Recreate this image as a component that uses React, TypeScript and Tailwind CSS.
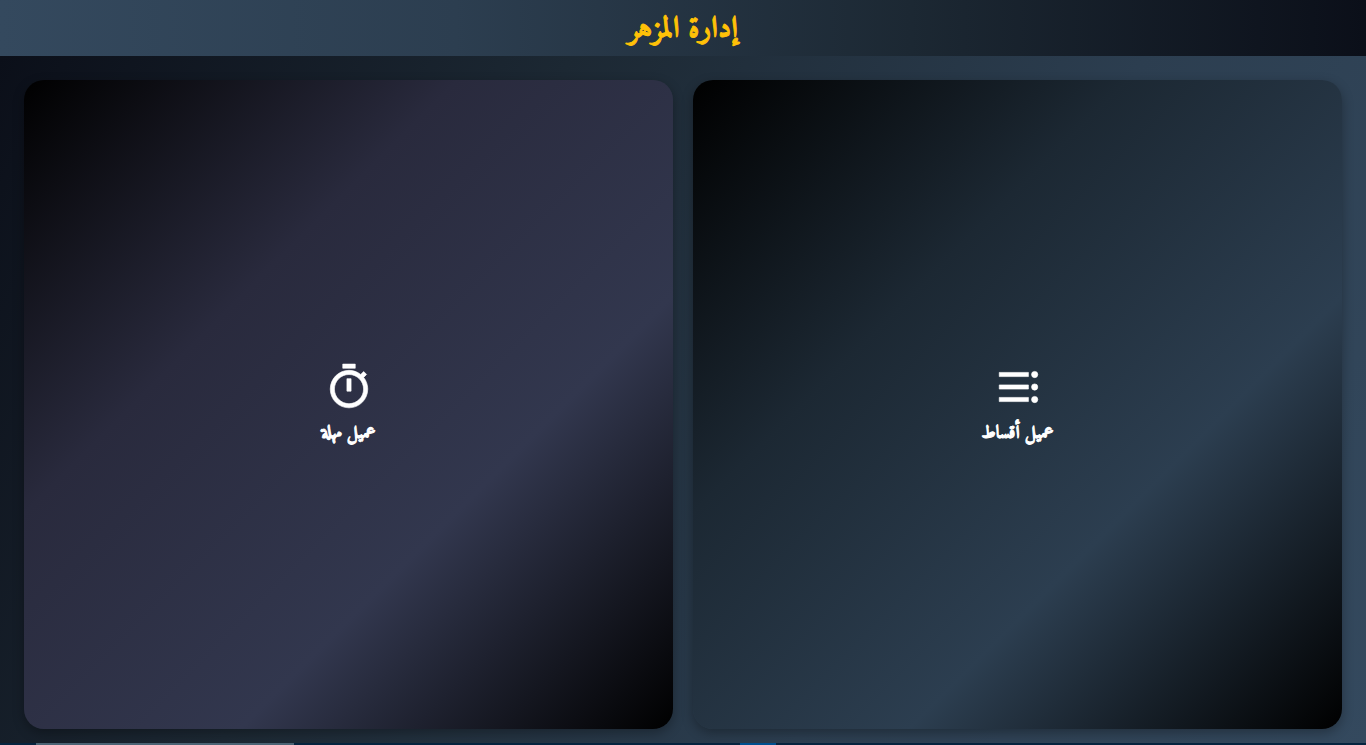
import React from 'react';

const TimerIcon: React.FC = () => (
  <svg
    viewBox="0 0 24 24"
    className="w-[50px] h-[50px]"
    fill="currentColor"
    stroke="currentColor"
    strokeWidth="0.3"
    aria-hidden="true"
  >
    <path d="M15 1H9v2h6V1zm-4 13h2V8h-2v6zm8.03-6.61 1.42-1.42c-.43-.51-.9-.99-1.41-1.41l-1.42 1.42C16.07 4.74 14.12 4 12 4c-4.97 0-9 4.03-9 9s4.02 9 9 9 9-4.03 9-9c0-2.12-.74-4.07-1.97-5.61zM12 20c-3.87 0-7-3.13-7-7s3.13-7 7-7 7 3.13 7 7-3.13 7-7 7z" />
  </svg>
);

const ListIcon: React.FC = () => (
  <svg
    viewBox="0 0 24 24"
    className="w-[50px] h-[50px]"
    fill="currentColor"
    stroke="currentColor"
    strokeWidth="0.3"
    aria-hidden="true"
  >
    <path d="M3 5h14v2H3zM3 11h14v2H3zM3 17h14v2H3z" />
    <circle cx="20" cy="6" r="1.5" />
    <circle cx="20" cy="12" r="1.5" />
    <circle cx="20" cy="18" r="1.5" />
  </svg>
);

const cards = [
  {
    label: 'عميل أقساط',
    icon: ListIcon,
    gradient: 'bg-[linear-gradient(135deg,#000000,#1c2833,#2c3e50,#000000)]',
  },
  {
    label: 'عميل مهلة',
    icon: TimerIcon,
    gradient: 'bg-[linear-gradient(135deg,#000000,#292a3d,#32374e,#000000)]',
  },
];

export default function App() {
  return (
    <div
      dir="rtl"
      className="min-h-screen flex flex-col font-['Amiri','Noto_Naskh_Arabic','Liberation_Serif',serif]"
    >
      <header className="h-14 pt-1 flex items-center justify-center bg-[linear-gradient(270deg,#0b0f19,#1c2833,#2c3e50,#34495e)]">
        <h1 className="text-[30px] leading-10 font-bold text-[#ffc107] [-webkit-text-stroke:1px_#ffc107]">
          إدارة المزهر
        </h1>
      </header>

      <main className="grow grid grid-cols-2 content-start gap-5 px-6 pt-6 pb-3.5 bg-[linear-gradient(117deg,#0b0f19,#1c2833,#2c3e50,#34495e)]">
        {cards.map((card) => (
          <button
            key={card.label}
            type="button"
            className={`aspect-square rounded-[20px] flex flex-col items-center justify-center gap-2 text-white shadow-[0_4px_12px_rgba(0,0,0,0.3)] cursor-pointer ${card.gradient}`}
          >
            <card.icon />
            <span className="text-lg leading-7 font-bold [-webkit-text-stroke:1px_white]">{card.label}</span>
          </button>
        ))}
      </main>

      {/* Taskbar edge */}
      <footer dir="ltr" className="h-0.5 flex bg-[#06243f] pl-9">
        <div className="w-[258px] bg-[#4b6475]" />
        <div className="w-9 ml-[446px] bg-[#00508f]" />
      </footer>
    </div>
  );
}
